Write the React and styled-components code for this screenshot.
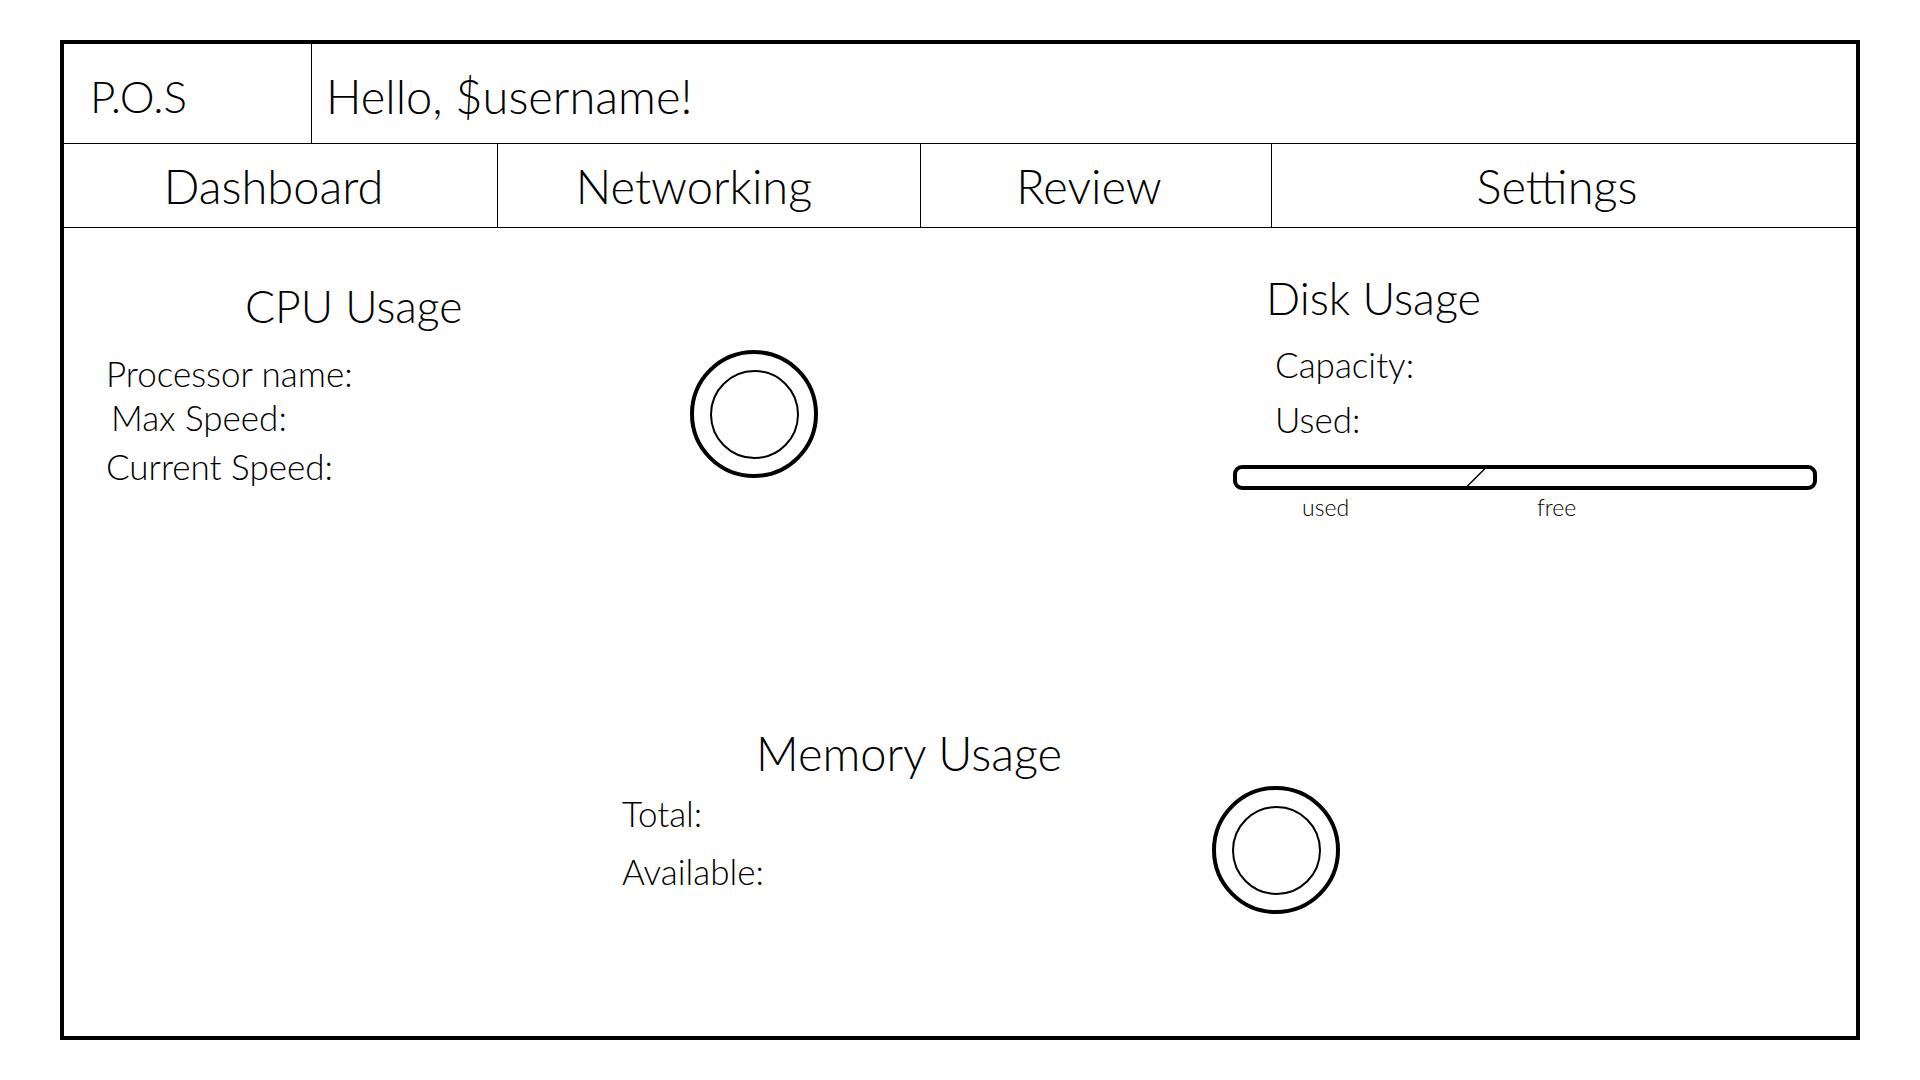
import React from "react";
import styled, { createGlobalStyle } from "styled-components";

const GlobalStyle = createGlobalStyle`
  html, body {
    margin: 0;
    padding: 0;
    background: #ffffff;
  }
  body {
    font-family: Lato, "Open Sans", "Liberation Sans", sans-serif;
    font-weight: 300;
    color: #000000;
  }
`;

const Page = styled.div`
  width: 1920px;
  height: 1080px;
  padding: 40px 60px;
  box-sizing: border-box;
`;

const Frame = styled.div`
  width: 1800px;
  height: 1000px;
  box-sizing: border-box;
  border: 4px solid #000;
  display: flex;
  flex-direction: column;
`;

const Header = styled.header`
  display: flex;
  height: 100px;
  box-sizing: border-box;
  border-bottom: 1px solid #000;
`;

const Logo = styled.div`
  width: 248px;
  box-sizing: border-box;
  border-right: 1px solid #000;
  display: flex;
  align-items: center;
  padding: 4px 0 0 26px;
  font-size: 44px;
`;

const Greeting = styled.div`
  display: flex;
  align-items: center;
  padding: 4px 0 0 14px;
  font-size: 47px;
`;

const Nav = styled.nav`
  display: grid;
  grid-template-columns: 434px 423px 351px 1fr;
  height: 84px;
  box-sizing: border-box;
  border-bottom: 1px solid #000;
`;

const Tab = styled.div`
  display: flex;
  align-items: center;
  justify-content: center;
  padding-right: ${(p) => p.pad}px;
  font-size: 47px;
  box-sizing: border-box;
  border-right: ${(p) => (p.last ? "none" : "1px solid #000")};
`;

const Content = styled.main`
  flex: 1;
  display: flex;
  flex-direction: column;
`;

const TopRow = styled.div`
  display: flex;
  justify-content: space-between;
  align-items: flex-start;
`;

const Panel = styled.section`
  padding-top: ${(p) => p.top}px;
  margin-left: ${(p) => p.left || 0}px;
  margin-right: ${(p) => p.right || 0}px;
  margin-top: ${(p) => p.mt || 0}px;
`;

const Heading = styled.h2`
  margin: 0 0 0 ${(p) => p.indent}px;
  font-size: ${(p) => p.size}px;
  font-weight: 300;
  line-height: 56px;
`;

const Body = styled.div`
  display: flex;
  align-items: flex-start;
`;

const Labels = styled.div`
  width: ${(p) => p.width}px;
  display: flex;
  flex-direction: column;
`;

const Label = styled.div`
  font-size: 35px;
  line-height: 44px;
  margin-top: ${(p) => p.gap || 0}px;
  padding-left: ${(p) => p.indent || 0}px;
`;

const Gauge = styled.div`
  width: 128px;
  height: 128px;
  box-sizing: border-box;
  border: 4px solid #000;
  border-radius: 50%;
  display: flex;
  align-items: center;
  justify-content: center;
  margin-top: ${(p) => p.offset || 0}px;
`;

const GaugeInner = styled.div`
  width: 89px;
  height: 89px;
  box-sizing: border-box;
  border: 2px solid #000;
  border-radius: 50%;
`;

const Bar = styled.div`
  position: relative;
  width: 584px;
  height: 25px;
  margin-top: ${(p) => p.gap}px;
  box-sizing: border-box;
  border: 4px solid #000;
  border-radius: 9px;
  overflow: hidden;
`;

const Split = styled.span`
  position: absolute;
  top: -2px;
  bottom: -2px;
  left: ${(p) => p.at}px;
  width: 1.5px;
  background: #000;
  transform: skewX(-45deg);
`;

const BarLegend = styled.div`
  display: flex;
  padding-left: 69px;
  margin-top: 3px;
  font-size: 23px;
  line-height: 28px;
`;

const LegendItem = styled.span`
  width: ${(p) => p.width}px;
`;

function UsageGauge({ offset }) {
  return (
    <Gauge offset={offset}>
      <GaugeInner />
    </Gauge>
  );
}

const tabs = [
  { name: "Dashboard", pad: 14 },
  { name: "Networking", pad: 30 },
  { name: "Review", pad: 14 },
  { name: "Settings", pad: 14 },
];

export default function App() {
  return (
    <Page>
      <GlobalStyle />
      <Frame>
        <Header>
          <Logo>P.O.S</Logo>
          <Greeting>Hello, $username!</Greeting>
        </Header>
        <Nav>
          {tabs.map((t, i) => (
            <Tab key={t.name} pad={t.pad} last={i === tabs.length - 1}>
              {t.name}
            </Tab>
          ))}
        </Nav>
        <Content>
          <TopRow>
            <Panel top={50} left={42}>
              <Heading indent={139} size={44.5}>CPU Usage</Heading>
              <Body>
                <Labels width={584}>
                  <Label gap={17}>Processor name:</Label>
                  <Label indent={5}>Max Speed:</Label>
                  <Label gap={5}>Current Speed:</Label>
                </Labels>
                <UsageGauge offset={16} />
              </Body>
            </Panel>
            <Panel top={42} right={39}>
              <Heading indent={33} size={45}>Disk Usage</Heading>
              <Label gap={16} indent={42}>Capacity:</Label>
              <Label gap={11} indent={42}>Used:</Label>
              <Bar gap={24}>
                <Split at={238} />
              </Bar>
              <BarLegend>
                <LegendItem width={235}>used</LegendItem>
                <LegendItem>free</LegendItem>
              </BarLegend>
            </Panel>
          </TopRow>
          <Panel top={0} left={558} mt={204}>
            <Heading indent={134} size={47}>Memory Usage</Heading>
            <Body>
              <Labels width={590}>
                <Label gap={10}>Total:</Label>
                <Label gap={14}>Available:</Label>
              </Labels>
              <UsageGauge offset={5} />
            </Body>
          </Panel>
        </Content>
      </Frame>
    </Page>
  );
}
